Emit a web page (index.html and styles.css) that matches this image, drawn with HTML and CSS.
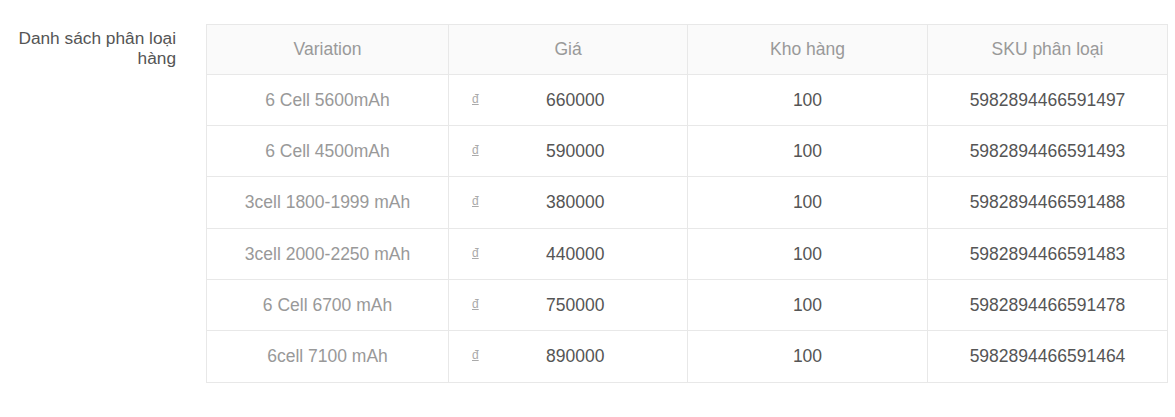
FILE: index.html
```html
<!DOCTYPE html>
<html lang="vi">
<head>
<meta charset="utf-8">
<link rel="stylesheet" href="styles.css">
</head>
<body>
<div class="form-row">
  <div class="label">Danh sách phân loại hàng</div>
  <table class="vtable">
    <thead>
      <tr><th>Variation</th><th>Giá</th><th>Kho hàng</th><th>SKU phân loại</th></tr>
    </thead>
    <tbody>
      <tr><td class="var">6 Cell 5600mAh</td><td class="price"><span class="cur">đ</span><span class="amt">660000</span></td><td>100</td><td>5982894466591497</td></tr>
      <tr><td class="var">6 Cell 4500mAh</td><td class="price"><span class="cur">đ</span><span class="amt">590000</span></td><td>100</td><td>5982894466591493</td></tr>
      <tr><td class="var">3cell 1800-1999 mAh</td><td class="price"><span class="cur">đ</span><span class="amt">380000</span></td><td>100</td><td>5982894466591488</td></tr>
      <tr><td class="var">3cell 2000-2250 mAh</td><td class="price"><span class="cur">đ</span><span class="amt">440000</span></td><td>100</td><td>5982894466591483</td></tr>
      <tr><td class="var">6 Cell 6700 mAh</td><td class="price"><span class="cur">đ</span><span class="amt">750000</span></td><td>100</td><td>5982894466591478</td></tr>
      <tr><td class="var">6cell 7100 mAh</td><td class="price"><span class="cur">đ</span><span class="amt">890000</span></td><td>100</td><td>5982894466591464</td></tr>
    </tbody>
  </table>
</div>
</body>
</html>
```
FILE: styles.css
```css
html, body {
  margin: 0;
  padding: 0;
  background: #fff;
}
body {
  font-family: "Liberation Sans", Arial, sans-serif;
  font-size: 17.5px;
  color: #555;
}
.form-row {
  display: flex;
  align-items: flex-start;
  padding-top: 24px;
}
.label {
  width: 176px;
  margin-right: 30px;
  text-align: right;
  color: #555;
  font-size: 17.3px;
  line-height: 20px;
  padding-top: 4px;
}
.vtable {
  border-collapse: collapse;
  table-layout: fixed;
  width: 962px;
}
.vtable th, .vtable td {
  border: 1px solid #e8e8e8;
  text-align: center;
  padding: 0;
  font-weight: normal;
}
.vtable th {
  background: #fafafa;
  color: #999;
  height: 49px;
}
.vtable th:nth-child(1), .vtable td:nth-child(1) { width: 241px; }
.vtable th:nth-child(2), .vtable td:nth-child(2) { width: 238px; }
.vtable th:nth-child(3), .vtable td:nth-child(3) { width: 239px; }
.vtable td {
  height: 50px;
  color: #555;
}
.vtable tbody tr:nth-child(3n) td { height: 51px; }
.vtable td.var {
  color: #999;
}
.vtable td.price {
  text-align: left;
  padding-left: 23px;
}
.cur {
  font-size: 12px;
  color: #aaa;
  text-decoration: underline;
  vertical-align: 3px;
  display: inline-block;
  width: 8px;
}
.amt {
  margin-left: 66px;
}
```
